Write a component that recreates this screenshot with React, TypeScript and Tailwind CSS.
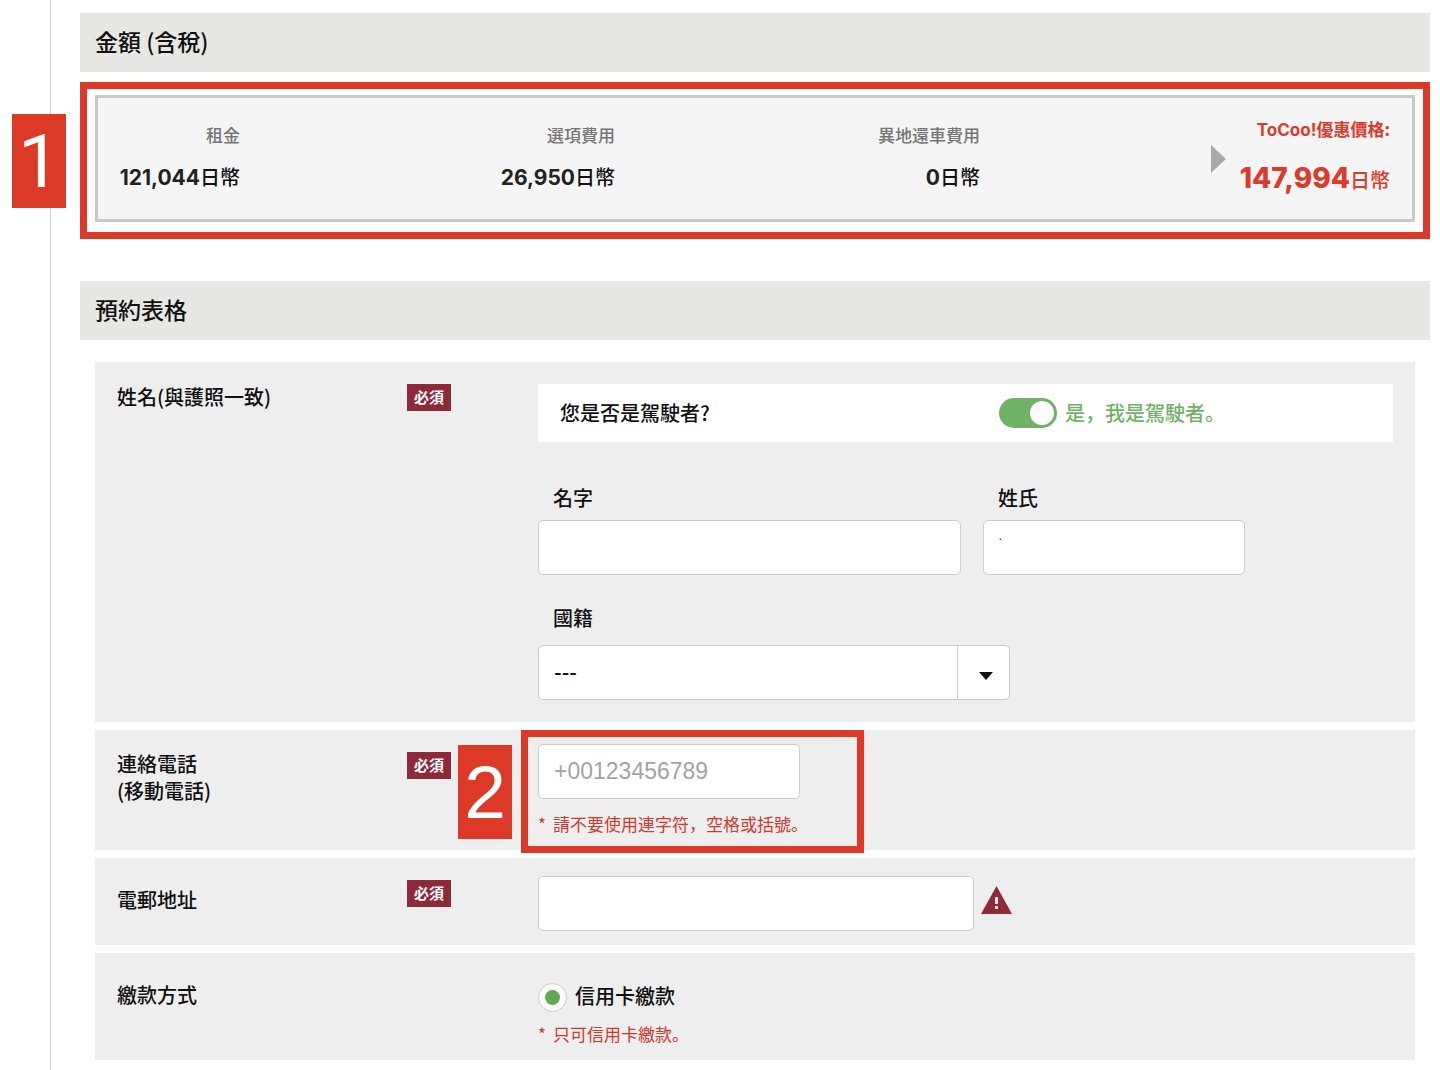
import { useState, type ReactNode } from "react";

const SANS = "font-['Noto_Sans_CJK_JP',sans-serif]";
const FIELD =
  "h-[55px] max-w-full rounded-[5px] border border-[#cbcbcb] bg-white px-[15px] font-['Liberation_Sans',sans-serif] text-[23px] text-[#111] outline-none";

function SectionTitle({ children }: { children: ReactNode }) {
  return (
    <h2 className="flex h-[59px] items-center bg-[#e7e8e3] px-[15px] pb-[3px] text-[23px] leading-7 font-medium text-[#111]">
      {children}
    </h2>
  );
}

function Price({ label, amount }: { label: string; amount: string }) {
  return (
    <div className="pt-[25px] text-right whitespace-nowrap">
      <dt className="text-[17px] leading-6 font-medium text-[#757575]">{label}</dt>
      <dd className="mt-4 text-xl leading-7 font-medium text-[#111]">
        <span className="font-['Inter',sans-serif] text-[21px] font-bold text-[#222]">{amount}</span>日幣
      </dd>
    </div>
  );
}

function Required() {
  return (
    <span className="flex h-[27px] w-11 items-center justify-center bg-[#8c2a3a] text-[15px] font-bold text-white">
      必須
    </span>
  );
}

function StepNumber({ value, place }: { value: number; place: string }) {
  return (
    <div className={`absolute flex h-[94px] w-[54px] items-center justify-center bg-[#dc3a26] leading-none text-white ${place}`}>
      {value}
    </div>
  );
}

function Row({
  label,
  required = false,
  labelPad,
  bodyPad,
  children,
}: {
  label: ReactNode;
  required?: boolean;
  labelPad: string;
  bodyPad: string;
  children: ReactNode;
}) {
  return (
    <div className="relative grid grid-cols-[290px_131px_1fr] bg-[#eeeeee] px-[22px]">
      <div className={`text-xl leading-[27px] font-medium text-[#111] ${labelPad}`}>{label}</div>
      <div className="pt-[22px]">{required && <Required />}</div>
      <div className={bodyPad}>{children}</div>
    </div>
  );
}

export default function App() {
  const [isDriver, setIsDriver] = useState(true);

  return (
    <div className={`flex min-h-screen bg-white ${SANS}`} lang="ja">
      <div className="w-[51px] shrink-0 border-r border-[#cccccc]" />
      <main className="min-w-0 flex-1 pt-[13px] pr-[10px] pb-[10px] pl-[29px]">
        <SectionTitle>金額 (含稅)</SectionTitle>

        <section className="relative mt-[10px] border-[7px] border-[#dc3a26] px-2 pt-[6px] pb-[10px]">
          <StepNumber value={1} place="top-[25px] -left-[75px] font-['Roboto',sans-serif] text-[75px]" />
          <dl className="grid h-[127px] grid-cols-[142fr_375fr_365fr_410fr] border-[3px] border-[#c9cac6] bg-[#f5f5f5] pr-[22px]">
            <Price label="租金" amount="121,044" />
            <Price label="選項費用" amount="26,950" />
            <Price label="異地還車費用" amount="0" />
            <div className="flex items-center justify-end gap-[14px] text-right whitespace-nowrap text-[#dc3a2b]">
              <svg className="h-7 w-[15px]" viewBox="0 0 15 28" aria-hidden="true">
                <path d="M0 0L15 14L0 28Z" fill="#a9a9a9" />
              </svg>
              <div className="pb-1">
                <dt className="text-[17px] leading-6 font-bold">
                  <span className="font-['Inter',sans-serif]">ToCoo!</span>優惠價格:
                </dt>
                <dd className="mt-5 text-xl leading-8 font-medium">
                  <span className="font-['Inter',sans-serif] text-[28px] font-extrabold">147,994</span>日幣
                </dd>
              </div>
            </div>
          </dl>
        </section>

        <div className="mt-[42px]">
          <SectionTitle>預約表格</SectionTitle>
        </div>

        <form className="mx-[15px] mt-[22px] flex flex-col gap-2" onSubmit={(e) => e.preventDefault()}>
          <Row label="姓名(與護照一致)" required labelPad="pt-[21px]" bodyPad="py-[22px]">
            <div className="grid h-[58px] grid-cols-[439fr_372fr] items-center bg-white px-[22px] text-xl font-medium text-[#111]">
              <span>您是否是駕駛者?</span>
              <label className="flex items-center gap-2 whitespace-nowrap text-[#70b267]">
                <input
                  type="checkbox"
                  role="switch"
                  checked={isDriver}
                  onChange={(e) => setIsDriver(e.target.checked)}
                  className="flex h-[30px] w-[58px] shrink-0 appearance-none items-center rounded-full bg-[#bbbbbb] px-[3px] before:size-6 before:rounded-full before:bg-white checked:justify-end checked:bg-[#6fb266]"
                />
                是，我是駕駛者。
              </label>
            </div>
            <div className="mt-11 flex gap-[22px]">
              <div className="flex flex-col gap-[10px]">
                <label htmlFor="first" className="pl-[15px] text-xl leading-6 font-medium text-[#111]">
                  名字
                </label>
                <input id="first" type="text" className={`w-[423px] ${FIELD}`} />
              </div>
              <div className="flex flex-col gap-[10px]">
                <label htmlFor="last" className="pl-[15px] text-xl leading-6 font-medium text-[#111]">
                  姓氏
                </label>
                <input
                  id="last"
                  type="text"
                  defaultValue="·"
                  className="h-[55px] w-[262px] max-w-full rounded-[5px] border border-[#cbcbcb] bg-white px-[14px] pb-5 font-['Liberation_Sans',sans-serif] text-sm text-[#444] outline-none"
                />
              </div>
            </div>
            <div className="mt-[31px] flex flex-col gap-[15px]">
              <label htmlFor="nation" className="pl-[15px] text-xl leading-6 font-medium text-[#111]">
                國籍
              </label>
              <div className="relative w-[472px] max-w-full">
                <select id="nation" className={`w-full appearance-none ${FIELD}`}>
                  <option>---</option>
                </select>
                <span className="pointer-events-none absolute inset-y-0 right-0 flex w-[53px] items-center justify-center border-l border-[#cbcbcb] pt-[6px] pl-1">
                  <svg className="h-2 w-[14px]" viewBox="0 0 14 8" aria-hidden="true">
                    <path d="M0 0H14L7 8Z" fill="#111" />
                  </svg>
                </span>
              </div>
            </div>
          </Row>

          <Row
            label={
              <label htmlFor="phone">
                連絡電話
                <br />
                (移動電話)
              </label>
            }
            required
            labelPad="pt-5"
            bodyPad="relative pt-[14px] pb-[13px]"
          >
            <input id="phone" type="tel" placeholder="+00123456789" className={`block w-[262px] placeholder:text-[#a3a3a3] ${FIELD}`} />
            <p className="mt-[13px] mb-px text-[17px] leading-6 text-[#cf3a30]">
              <span className="mr-[7px]">*</span>請不要使用連字符，空格或括號。
            </p>
            <div className="pointer-events-none absolute top-0 -left-[17px] h-[123px] w-[343px] border-[7px] border-[#dc3a26]" />
            <StepNumber value={2} place="top-[15px] -left-20 font-['Liberation_Sans',sans-serif] text-[75px]" />
          </Row>

          <Row
            label={<label htmlFor="email">電郵地址</label>}
            required
            labelPad="pt-7"
            bodyPad="flex items-center gap-[7px] pt-[18px] pb-[14px]"
          >
            <input id="email" type="email" className={`w-[436px] ${FIELD}`} />
            <svg className="mb-2 h-7 w-[31px] shrink-0" viewBox="0 0 31 28" role="img" aria-label="!">
              <path d="M15.5 0L31 28H0Z" fill="#8f2a38" />
              <path d="M14 11H17V18H14ZM14 20H17V23H14Z" fill="#f3e6e8" />
            </svg>
          </Row>

          <Row label="繳款方式" labelPad="pt-7" bodyPad="pt-[29px] pb-[14px]">
            <label className="flex w-fit items-center gap-2 text-xl leading-7 font-medium text-[#111]">
              <input
                type="radio"
                name="payment"
                defaultChecked
                className="flex size-[29px] appearance-none items-center justify-center rounded-full border border-[#cbcbcb] bg-white before:size-[15px] before:rounded-full checked:before:bg-[#61a855]"
              />
              <span className="pb-[3px]">信用卡繳款</span>
            </label>
            <p className="mt-[9px] text-[17px] leading-6 text-[#cf3a30]">
              <span className="mr-[7px]">*</span>只可信用卡繳款。
            </p>
          </Row>
        </form>
      </main>
    </div>
  );
}
